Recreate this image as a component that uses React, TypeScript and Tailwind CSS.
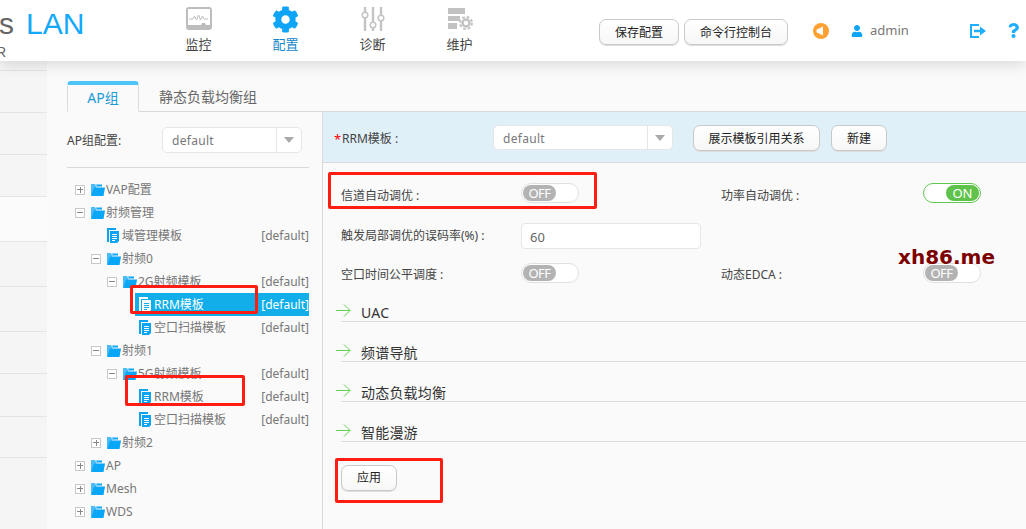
import { FaCog, FaUser, FaQuestion } from "react-icons/fa";

const sidebarRows = [
  "h-[10px]",
  "h-[42px]",
  "h-[42px]",
  "h-[42px]",
  "h-[45px] bg-[#fbfbfb]",
  "h-[45px]",
  "h-[45px]",
  "h-[42px]",
  "h-[43px]",
  "h-[41px]",
];

type TreeRow = {
  label: string;
  pad: string;
  kind: "plus" | "minus" | "leaf";
  value?: boolean;
  selected?: boolean;
};

const treeRows: TreeRow[] = [
  { label: "VAP配置", pad: "pl-[8px]", kind: "plus" },
  { label: "射频管理", pad: "pl-[8px]", kind: "minus" },
  { label: "域管理模板", pad: "pl-[40px]", kind: "leaf", value: true },
  { label: "射频0", pad: "pl-[24px]", kind: "minus" },
  { label: "2G射频模板", pad: "pl-[40px]", kind: "minus", value: true },
  { label: "RRM模板", pad: "pl-[72px]", kind: "leaf", value: true, selected: true },
  { label: "空口扫描模板", pad: "pl-[72px]", kind: "leaf", value: true },
  { label: "射频1", pad: "pl-[24px]", kind: "minus" },
  { label: "5G射频模板", pad: "pl-[40px]", kind: "minus", value: true },
  { label: "RRM模板", pad: "pl-[72px]", kind: "leaf", value: true },
  { label: "空口扫描模板", pad: "pl-[72px]", kind: "leaf", value: true },
  { label: "射频2", pad: "pl-[24px]", kind: "plus" },
  { label: "AP", pad: "pl-[8px]", kind: "plus" },
  { label: "Mesh", pad: "pl-[8px]", kind: "plus" },
  { label: "WDS", pad: "pl-[8px]", kind: "plus" },
  { label: "", pad: "pl-[8px]", kind: "plus" },
];

const sections = ["UAC", "频谱导航", "动态负载均衡", "智能漫游"];

const MonitorIcon = () => (
  <svg width="26" height="24" viewBox="0 0 26 24" fill="none">
    <rect x="1" y="1" width="24" height="21" rx="2" stroke="#bdbdbd" strokeWidth="2" />
    <path d="M3 12h4l1.500-3 2 4 2-5 2 5 2-4 1.500 3h4" stroke="#bdbdbd" strokeWidth="1" />
    <path d="M2 18h13l1-2h3l1 2h4v3H2z" fill="#bdbdbd" />
  </svg>
);

const SlidersIcon = () => (
  <svg width="24" height="28" viewBox="0 0 24 28" fill="none" stroke="#c4c4c4">
    <path d="M4 2v5M4 13v13M12 2v15M12 23v3M20 2v8M20 16v10" strokeWidth="2.400" />
    <circle cx="4" cy="10" r="2.800" strokeWidth="1.500" />
    <circle cx="12" cy="20" r="2.800" strokeWidth="1.500" />
    <circle cx="20" cy="13" r="2.800" strokeWidth="1.500" />
  </svg>
);

const ServerIcon = () => (
  <svg width="26" height="22" viewBox="0 0 26 22" fill="#c2c2c2">
    <path d="M1 0h17v6H1zM1 8h12v5H1zM1 15h9v6H1z" />
    <circle cx="19" cy="15" r="3.500" fill="none" stroke="#c2c2c2" strokeWidth="2.500" />
    <circle cx="19" cy="15" r="6" fill="none" stroke="#c2c2c2" strokeWidth="2" strokeDasharray="2.700 2.010" />
  </svg>
);

const SoundIcon = () => (
  <svg width="16" height="16" viewBox="0 0 16 16">
    <circle cx="8" cy="8" r="8" fill="#ffa132" />
    <path d="M3.500 6.800 8 4.500l2-1v9l-2-1-4.500-2.300z" fill="#fff" />
  </svg>
);

const LogoutIcon = () => (
  <svg width="16" height="14" viewBox="0 0 16 14" fill="none">
    <path d="M9 1H1v12h8" stroke="#1eaefc" strokeWidth="2" />
    <path d="M4 5.800h6V2.500L16 7l-6 4.500V8.200H4z" fill="#1eaefc" />
  </svg>
);

const FolderIcon = () => (
  <svg width="14" height="13" viewBox="0 0 14 13" className="shrink-0">
    <path d="M0 12V1h4l1 2h1L0.500 12z" fill="#4cbcf8" />
    <path d="M3 4.500h11L12.500 13H0z" fill="#0aa6f7" />
    <path d="M5 1.500h6v2H6z" fill="#0aa6f7" />
  </svg>
);

const DocIcon = ({ selected }: { selected?: boolean }) => {
  const main = selected ? "#ffffff" : "#0ca5f2";
  const line = selected ? "#11aeea" : "#ffffff";
  return (
    <svg width="12" height="16" viewBox="0 0 12 16" className="shrink-0">
      <path d="M0 0h9v2H2v12H0z" fill={main} />
      <path d="M3 3h9v10l-2 2H3z" fill={main} />
      <path d="M5 6.500h5M5 8.500h5M5 10.500h5M5 12.500h3" stroke={line} strokeWidth="1" />
    </svg>
  );
};

const GreenArrow = () => (
  <svg width="15" height="13" viewBox="0 0 15 13" fill="none" stroke="#62cf52" className="shrink-0">
    <path d="M0 6.500h14M8 0.500l6 6-6 6" strokeWidth="1" />
  </svg>
);

const ExpandBox = ({ open }: { open: boolean }) => (
  <span className="relative flex h-[10px] w-[10px] shrink-0 items-center justify-center border border-[#c8c8c8] bg-white">
    <span className="h-px w-[6px] bg-[#888]" />
    {!open && <span className="absolute h-[6px] w-px bg-[#888]" />}
  </span>
);

const Btn = ({ label, size }: { label: string; size: string }) => (
  <button
    className={`${size} rounded-[7px] border border-[#c9c9c9] bg-gradient-to-b from-white to-[#f7f7f7] pt-px text-[12px] text-[#222] shadow-[0_1px_0_#ddd]`}
  >
    {label}
  </button>
);

const SelectBox = ({ size }: { size: string }) => (
  <div className={`${size} flex rounded-[5px] border border-[#e6e6e6] bg-white`}>
    <span className="flex-1 pl-[9px] text-[12px] leading-[26px] tracking-[0.3px] text-[#777]">default</span>
    <span className="flex w-[25px] items-center justify-center border-l border-[#e6e6e6]">
      <span className="h-0 w-0 border-x-[5px] border-t-[6px] border-x-transparent border-t-[#aaa]" />
    </span>
  </div>
);

const Toggle = ({ on }: { on?: boolean }) =>
  on ? (
    <div className="flex h-[20px] w-[58px] items-center justify-end rounded-full border border-[#62c652] bg-white pr-px">
      <span className="h-[16px] w-[33px] rounded-full bg-[#5fc24a] text-center text-[13px] leading-[16px] text-white">
        ON
      </span>
    </div>
  ) : (
    <div className="flex h-[20px] w-[58px] items-center rounded-full border border-[#e0e0e0] bg-white pl-px">
      <span className="h-[16px] w-[33px] rounded-full bg-[#b3b3b3] text-center text-[13px] leading-[16px] tracking-[-0.5px] text-white">
        OFF
      </span>
    </div>
  );

const App = () => {
  return (
    <div className="relative flex h-[529px] w-[1026px] flex-col overflow-hidden bg-[#fafafa] font-['Noto_Sans','Noto_Sans_CJK_SC',sans-serif]">
      {/* header */}
      <header className="relative z-10 flex h-[61px] shrink-0 items-start bg-white shadow-[0_3px_14px_rgba(0,0,0,0.14)]">
        <div className="w-[155px] shrink-0 overflow-hidden font-['Liberation_Sans',sans-serif]">
          <div className="-ml-[1px] mt-[7px] flex h-[34px] items-center text-[30px] leading-[34px]">
            <span className="w-[27px] text-[#666]">s</span>
            <span className="text-[#12a9fb]">LAN</span>
          </div>
          <div className="-ml-[4px] mt-[3px] text-[14px] leading-[16px] text-[#666]">R</div>
        </div>
        <nav className="flex shrink-0">
          <div className="flex w-[87px] flex-col items-center pt-[6px]">
            <div className="flex h-[26px] items-center"><MonitorIcon /></div>
            <span className="mt-[3px] text-[13px] leading-[18px] text-[#444]">监控</span>
          </div>
          <div className="flex w-[87px] flex-col items-center pt-[6px]">
            <div className="flex h-[26px] items-center"><FaCog className="text-[27px] text-[#0ea5f7]" /></div>
            <span className="mt-[3px] text-[13px] leading-[18px] text-[#1487c9]">配置</span>
          </div>
          <div className="flex w-[87px] flex-col items-center pt-[6px]">
            <div className="flex h-[26px] items-center"><SlidersIcon /></div>
            <span className="mt-[3px] text-[13px] leading-[18px] text-[#444]">诊断</span>
          </div>
          <div className="flex w-[87px] flex-col items-center pt-[6px]">
            <div className="flex h-[26px] items-center"><ServerIcon /></div>
            <span className="mt-[3px] text-[13px] leading-[18px] text-[#444]">维护</span>
          </div>
        </nav>
        <div className="ml-[96px] mt-[19px] flex gap-[5px]">
          <Btn label="保存配置" size="h-[26px] w-[80px]" />
          <Btn label="命令行控制台" size="h-[26px] w-[104px]" />
        </div>
        <div className="ml-[25px] mt-[23px]"><SoundIcon /></div>
        <div className="ml-[22px] mt-[21px] flex h-[20px] items-center">
          <FaUser className="text-[12px] text-[#0ea5f7]" />
          <span className="ml-[7px] text-[13px] text-[#777]">admin</span>
        </div>
        <div className="ml-[61px] mt-[24px]"><LogoutIcon /></div>
        <div className="ml-[20px] mt-[23px]"><FaQuestion className="text-[15px] text-[#1eaefc]" /></div>
      </header>

      <div className="flex min-h-0 flex-1">
        {/* collapsed side menu */}
        <aside className="flex w-[47px] shrink-0 flex-col bg-[#f5f5f5]">
          {sidebarRows.map((row, i) => (
            <div key={i} className={`${row} border-b border-[#e4e4e4]`} />
          ))}
        </aside>

        <main className="flex min-w-0 flex-1 flex-col pl-[20px] pt-[20px]">
          {/* tabs */}
          <div className="flex h-[31px] shrink-0 border-b border-[#d9d9d9]">
            <div className="-mb-px h-[31px] w-[72px] rounded-t-[4px] border-x border-b border-x-[#dcdcdc] border-b-[#fafafa] border-t-[4px] border-t-[#4cc4f7] bg-[#fafafa] text-center text-[14px] leading-[26px] text-[#1c9ad6]">
              AP组
            </div>
            <div className="ml-[20px] pt-[6px] text-[14px] leading-[20px] text-[#666]">静态负载均衡组</div>
          </div>

          <div className="flex min-h-0 flex-1">
            {/* AP group tree */}
            <section className="w-[255px] shrink-0">
              <div className="flex h-[56px] w-[242px] items-start border-b border-[#d9d9d9] pt-[15px]">
                <label className="w-[95px] text-[12px] leading-[28px] text-[#444]">AP组配置:</label>
                <SelectBox size="h-[26px] w-[140px]" />
              </div>
              <div className="w-[242px] pt-[10px]">
                {treeRows.map((row, i) => (
                  <div
                    key={i}
                    className={`flex h-[23px] items-center text-[12px] ${row.pad} ${row.selected ? "bg-[linear-gradient(to_right,transparent_68px,#11aeea_68px)] text-white" : "text-[#777]"}`}
                  >
                    {row.kind === "leaf" ? (
                      <>
                        <DocIcon selected={row.selected} />
                        <span className="ml-[3px] flex-1">{row.label}</span>
                      </>
                    ) : (
                      <>
                        <ExpandBox open={row.kind === "minus"} />
                        <span className="ml-[6px]"><FolderIcon /></span>
                        <span className="ml-px flex-1">{row.label}</span>
                      </>
                    )}
                    {row.value && <span className="shrink-0">[default]</span>}
                  </div>
                ))}
              </div>
            </section>

            {/* RRM form */}
            <section className="min-w-0 flex-1 border-l border-[#d9d9d9]">
              <div className="flex h-[51px] items-start border-b border-[#d9d9d9] bg-[#e0f0f9] pl-[11px] pt-[13px]">
                <span className="w-[8px] text-[13px] leading-[28px] text-[#f00]">*</span>
                <span className="w-[151px] text-[12px] leading-[28px] text-[#444]">RRM模板 :</span>
                <SelectBox size="h-[25px] w-[180px]" />
                <div className="ml-[20px] flex gap-[11px]">
                  <Btn label="展示模板引用关系" size="h-[26px] w-[127px]" />
                  <Btn label="新建" size="h-[26px] w-[56px]" />
                </div>
              </div>

              <div className="pl-[18px] pt-[20px]">
                <div className="flex h-[20px] items-center">
                  <span className="w-[180px] pt-[5px] text-[12px] text-[#444]">信道自动调优 :</span>
                  <Toggle />
                  <span className="ml-[142px] w-[202px] pt-[5px] text-[12px] text-[#444]">功率自动调优 :</span>
                  <Toggle on />
                </div>
                <div className="mt-[20px] flex h-[26px] items-center">
                  <span className="w-[180px] text-[12px] text-[#444]">触发局部调优的误码率(%) :</span>
                  <input
                    readOnly
                    value="60"
                    className="h-[26px] w-[180px] rounded-[4px] border border-[#e6e6e6] bg-white pl-[8px] pt-px text-[13px] text-[#666]"
                  />
                </div>
                <div className="mt-[14px] flex h-[20px] items-center">
                  <span className="w-[180px] pt-[4px] text-[12px] text-[#444]">空口时间公平调度 :</span>
                  <Toggle />
                  <span className="ml-[142px] w-[202px] pt-[4px] text-[12px] text-[#444]">动态EDCA :</span>
                  <Toggle />
                </div>

                <div className="-mt-px">
                  {sections.map((title) => (
                    <div key={title} className="flex h-[40px] items-end border-b border-[#dcdcdc]">
                      <span className="-ml-[5px] mb-[4px]"><GreenArrow /></span>
                      <span className="ml-[10px] text-[14px] leading-[17px] tracking-[0.2px] text-[#333]">{title}</span>
                    </div>
                  ))}
                </div>

                <div className="mt-[22px]">
                  <Btn label="应用" size="h-[26px] w-[56px]" />
                </div>
              </div>
            </section>
          </div>
        </main>
      </div>

      {/* red annotation boxes and watermark drawn over the screenshot */}
      <div className="absolute left-[328px] top-[172px] z-20 h-[37px] w-[269px] rounded-[2px] border-[3px] border-[#ff1d12]" />
      <div className="absolute left-[130px] top-[285px] z-20 h-[29px] w-[128px] rounded-[2px] border-[3px] border-[#ff1d12]" />
      <div className="absolute left-[125px] top-[375px] z-20 h-[31px] w-[120px] rounded-[2px] border-[3px] border-[#ff1d12]" />
      <div className="absolute left-[335px] top-[458px] z-20 h-[45px] w-[108px] rounded-[2px] border-[3px] border-[#ff1d12]" />
      <div className="absolute left-[898px] top-[249px] z-20 whitespace-nowrap font-['DejaVu_Sans',sans-serif] text-[20px] font-bold leading-[16px] text-[#7c0000]">
        xh86.me
      </div>
    </div>
  );
};

export default App;
